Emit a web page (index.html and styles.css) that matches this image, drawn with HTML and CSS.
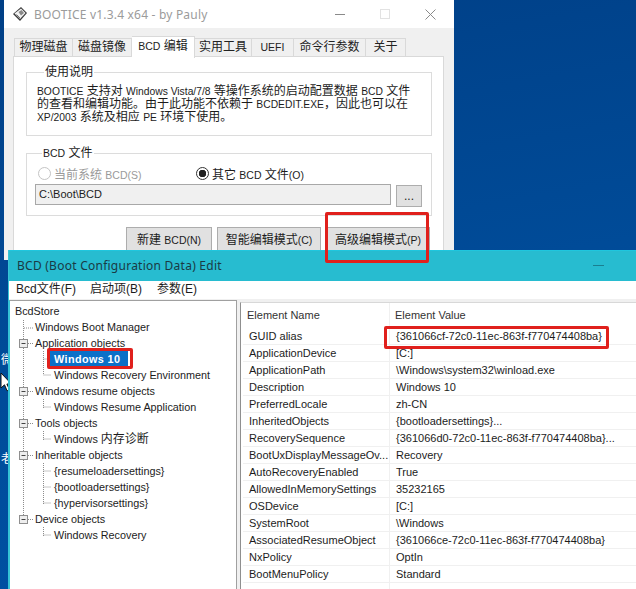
FILE: index.html
```html
<!DOCTYPE html>
<html lang="zh-CN">
<head>
<meta charset="utf-8">
<title>BOOTICE</title>
<link rel="stylesheet" href="styles.css">
</head>
<body>
<div class="desktop">
  <span class="deskglyph g1">微</span>
  <span class="deskglyph g2">老</span>
  <svg class="cursor" width="12" height="20" viewBox="0 0 12 20"><path d="M1 1v15l3.5-3.2 2.6 6 2.4-1-2.6-5.8h4.6z" fill="#fff" stroke="#111" stroke-width="1"/></svg>

  <section class="win boot">
    <header class="boot-title">
      <svg class="boot-icon" width="16" height="16" viewBox="0 0 16 16"><path d="M9 1l6 6-7 8-7-7z" fill="#3a3a3a"/><path d="M9 2.500l4.500 4.500-5.500 6-5.500-5.500z" fill="#f2f2f2"/><path d="M6.500 6l3-2 2.500 3-3 2.500z" fill="#8a8a8a"/><path d="M4.500 8.500l3.500 3.500" stroke="#777"/></svg>
      <span class="boot-name">BOOTICE v1.3.4 x64 - by Pauly</span>
      <div class="controls">
        <svg width="10" height="10" viewBox="0 0 10 10"><path d="M0 5.5h10" stroke="#8a8a8a"/></svg>
        <svg width="10" height="10" viewBox="0 0 10 10"><rect x=".5" y=".5" width="9" height="9" fill="none" stroke="#e2e2e2"/></svg>
        <svg width="11" height="11" viewBox="0 0 11 11"><path d="M.5.5l10 10M10.500.5l-10 10" stroke="#8a8a8a"/></svg>
      </div>
    </header>
    <div class="boot-body">
      <nav class="tabs">
        <span class="tab w59">物理磁盘</span>
        <span class="tab w59">磁盘镜像</span>
        <span class="tab active w63"><span class="lt">BCD</span> 编辑</span>
        <span class="tab w57">实用工具</span>
        <span class="tab w42"><span class="lt">UEFI</span></span>
        <span class="tab w72">命令行参数</span>
        <span class="tab w40">关于</span>
      </nav>
      <div class="panel">
        <fieldset class="group usage">
          <legend>使用说明</legend>
          <p><span class="lt">BOOTICE</span> 支持对 <span class="lt">Windows Vista/7/8</span> 等操作系统的启动配置数据 <span class="lt">BCD</span> 文件<br>的查看和编辑功能。由于此功能不依赖于 <span class="lt">BCDEDIT.EXE</span>，因此也可以在<br><span class="lt">XP/2003</span> 系统及相应 <span class="lt">PE</span> 环境下使用。</p>
        </fieldset>
        <fieldset class="group file">
          <legend><span class="lt">BCD</span> 文件</legend>
          <div class="radios">
            <label class="radio disabled"><i class="dot"></i><span>当前系统 <span class="lt">BCD(S)</span></span></label>
            <label class="radio"><i class="dot on"></i><span>其它 <span class="lt">BCD</span> 文件<span class="lt">(O)</span></span></label>
          </div>
          <div class="path-row">
            <div class="path">C:\Boot\BCD</div>
            <div class="btn browse">...</div>
          </div>
        </fieldset>
        <div class="actions">
          <div class="btn w86">新建 <span class="lt">BCD(N)</span></div>
          <div class="btn w104">智能编辑模式<span class="lt">(C)</span></div>
          <div class="btn w104">高级编辑模式<span class="lt">(P)</span></div>
        </div>
      </div>
    </div>
  </section>

  <section class="win edit">
    <header class="edit-title">
      <span>BCD (Boot Configuration Data) Edit</span>
      <i class="edit-min"></i>
    </header>
    <div class="menu">
      <span class="m1">Bcd文件(F)</span>
      <span class="m2">启动项(B)</span>
      <span class="m3">参数(E)</span>
    </div>
    <div class="client">
      <div class="tree">
        <svg class="lines" width="228" height="290" viewBox="0 0 228 290">
          <g fill="none" stroke="#8c8c8c" stroke-dasharray="1 1">
            <path d="M14.500 19v200M15 27h10"/>
            <path d="M34.500 50v24M34.500 58h8M34.500 74h8"/>
            <path d="M34.500 98v10M34.500 106h8"/>
            <path d="M34.500 130v10M34.500 138h8"/>
            <path d="M34.500 162v42M34.500 170h8M34.500 186h8M34.500 202h8"/>
            <path d="M34.500 226v10M34.500 234h8"/>
          </g>
          <g fill="#eeeeee" stroke="#8f8f8f">
            <rect x="10.500" y="38.500" width="8" height="8"/>
            <rect x="10.500" y="86.500" width="8" height="8"/>
            <rect x="10.500" y="118.500" width="8" height="8"/>
            <rect x="10.500" y="150.500" width="8" height="8"/>
            <rect x="10.500" y="214.500" width="8" height="8"/>
          </g>
          <g stroke="#444">
            <path d="M12.500 42.500h4M12.500 90.500h4M12.500 122.500h4M12.500 154.500h4M12.500 218.500h4"/>
            <path d="M19 42.500h6M19 90.500h6M19 122.500h6M19 154.500h6M19 218.500h6" stroke="#8c8c8c" stroke-dasharray="1 1"/>
          </g>
        </svg>
        <div class="node root">BcdStore</div>
        <div class="node l1">Windows Boot Manager</div>
        <div class="node l1">Application objects</div>
        <div class="node l2"><span class="selected">Windows 10</span></div>
        <div class="node l2">Windows Recovery Environment</div>
        <div class="node l1">Windows resume objects</div>
        <div class="node l2">Windows Resume Application</div>
        <div class="node l1">Tools objects</div>
        <div class="node l2">Windows <span class="cj">内存诊断</span></div>
        <div class="node l1">Inheritable objects</div>
        <div class="node l2">{resumeloadersettings}</div>
        <div class="node l2">{bootloadersettings}</div>
        <div class="node l2">{hypervisorsettings}</div>
        <div class="node l1">Device objects</div>
        <div class="node l2">Windows Recovery</div>
      </div>
      <div class="list">
        <div class="row head"><span class="name">Element Name</span><span class="value">Element Value</span></div>
        <div class="row"><span class="name">GUID alias</span><span class="value">{361066cf-72c0-11ec-863f-f770474408ba}</span></div>
        <div class="row"><span class="name">ApplicationDevice</span><span class="value">[C:]</span></div>
        <div class="row"><span class="name">ApplicationPath</span><span class="value">\Windows\system32\winload.exe</span></div>
        <div class="row"><span class="name">Description</span><span class="value">Windows 10</span></div>
        <div class="row"><span class="name">PreferredLocale</span><span class="value">zh-CN</span></div>
        <div class="row"><span class="name">InheritedObjects</span><span class="value">{bootloadersettings}...</span></div>
        <div class="row"><span class="name">RecoverySequence</span><span class="value">{361066d0-72c0-11ec-863f-f770474408ba}...</span></div>
        <div class="row"><span class="name">BootUxDisplayMessageOv...</span><span class="value">Recovery</span></div>
        <div class="row"><span class="name">AutoRecoveryEnabled</span><span class="value">True</span></div>
        <div class="row"><span class="name">AllowedInMemorySettings</span><span class="value">35232165</span></div>
        <div class="row"><span class="name">OSDevice</span><span class="value">[C:]</span></div>
        <div class="row"><span class="name">SystemRoot</span><span class="value">\Windows</span></div>
        <div class="row"><span class="name">AssociatedResumeObject</span><span class="value">{361066ce-72c0-11ec-863f-f770474408ba}</span></div>
        <div class="row"><span class="name">NxPolicy</span><span class="value">OptIn</span></div>
        <div class="row"><span class="name">BootMenuPolicy</span><span class="value">Standard</span></div>
        <div class="row"><span class="name"></span><span class="value"></span></div>
      </div>
    </div>
  </section>

  <i class="mark mark-button"></i>
  <i class="mark mark-tree"></i>
  <i class="mark mark-guid"></i>
</div>
</body>
</html>
```

FILE: styles.css
```css
* { box-sizing: border-box; }
html, body { margin: 0; height: 100%; overflow: hidden; }
body { font-family: "Liberation Sans", "Noto Sans CJK SC", sans-serif; font-size: 11px; color: #1c1c1c; }
.lt { font-size: 10.500px; }
.usage .lt { font-size: 10.300px; }
.cj { font-size: 12px; }
.desktop { position: relative; width: 636px; height: 589px; overflow: hidden; background: linear-gradient(170deg, #003f86 0%, #004b98 50%, #0052a6 100%); }
.win { position: absolute; }
.deskglyph { position: absolute; left: 1px; color: #fff; font-size: 12px; line-height: 14px; width: 7px; overflow: hidden; }
.g1 { top: 353px; }
.g2 { top: 452px; }
.cursor { position: absolute; left: 0; top: 372px; }

/* BOOTICE window */
.boot { left: 4px; top: 0; width: 450px; height: 260px; background: #f0f0f0; }
.boot-title { height: 28px; background: #fff; display: flex; align-items: center; padding-left: 8px; }
.boot-icon { margin-right: 6px; }
.boot-name { font-family: "Noto Sans", sans-serif; font-size: 12px; color: #9b9b9b; letter-spacing: .2px; }
.controls { margin-left: auto; display: flex; gap: 35px; align-items: center; padding-right: 18px; }
.boot-body { padding: 8px 10px 0 9px; }
.tabs { display: flex; height: 20px; padding-left: 1px; position: relative; z-index: 1; }
.tab { margin-top: 2px; height: 19px; background: #f0f0f0; border: 1px solid #d9d9d9; border-left-width: 0; font-size: 12px; line-height: 17px; text-align: center; color: #222; }
.tab:first-child { border-left-width: 1px; }
.tab.active { margin-top: 0; height: 22px; background: #fff; border-bottom: 0; line-height: 18px; position: relative; }
.w59 { width: 59px; }
.w63 { width: 63px; }
.w57 { width: 57px; }
.w42 { width: 42px; }
.w72 { width: 72px; }
.w40 { width: 40px; }
.panel { height: 204px; background: #fff; border: 1px solid #d9d9d9; padding: 8px 11px 0 12px; }
.group { margin: 0; padding: 0; border: 1px solid #dcdcdc; min-width: 0; }
.group legend { margin-left: 7px; padding: 0 1px; font-size: 12px; line-height: 14px; }
.usage { height: 71px; padding: 6px 0 0 10px; }
.usage p { margin: 0; font-size: 12px; line-height: 13px; white-space: nowrap; }
.file { height: 70px; margin-top: 10px; padding: 0 0 0 8px; }
.radios { display: flex; height: 18px; align-items: center; margin-top: 4px; }
.radio { display: flex; align-items: center; gap: 3px; font-size: 12px; }
.radio:first-child { width: 158px; margin-left: 3px; }
.radio.disabled { color: #9a9a9a; }
.dot { width: 13px; height: 13px; border: 1px solid #333; border-radius: 50%; background: #fff; display: block; }
.disabled .dot { border-color: #c4c4c4; }
.dot.on { background: radial-gradient(circle, #222 0 3.500px, #fff 4px); }
.path-row { display: flex; align-items: flex-start; gap: 5px; margin-top: 2px; }
.path { width: 356px; height: 21px; background: #f0f0f0; border: 1px solid #a8a8a8; line-height: 19px; padding-left: 3px; }
.btn { background: #e1e1e1; border: 1px solid #adadad; text-align: center; font-size: 12px; line-height: 24px; height: 26px; }
.browse { width: 26px; height: 22px; line-height: 20px; margin-top: 1px; }
.actions { display: flex; gap: 5px; margin: 11px 0 0 100px; }
.w86 { width: 86px; }
.w104 { width: 104px; }

/* BCD editor window */
.edit { left: 8px; top: 250px; width: 628px; height: 339px; background: #f0f0f0; border-left: 1px solid #36c3d6; }
.edit-title { height: 31px; background: #27bcd0; display: flex; align-items: center; padding: 0 0 2px 8px; font-family: "Noto Sans", sans-serif; font-size: 12px; letter-spacing: .25px; color: #1a3a44; border-top: 1px solid #1fc6de; }
.edit-min { display: block; width: 11px; height: 1px; background: #1a7f90; margin-left: 371px; }
.menu { height: 18px; background: #fff; display: flex; font-size: 12px; line-height: 17px; padding-left: 7px; }
.m1 { width: 74px; }
.m2 { width: 67px; }
.client { display: flex; gap: 3px; padding-top: 1px; height: 290px; align-items: flex-start; }
.tree { position: relative; width: 228px; height: 290px; background: #fff; border-left: 1px solid #36c3d6; border-right: 1px solid #a0a0a0; border-top: 1px solid #a0a0a0; }
.lines { position: absolute; left: -1px; top: 0; }
.node { position: relative; height: 16px; line-height: 16px; white-space: nowrap; font-size: 10.800px; }
.root { padding-left: 5px; margin-top: 2px; }
.l1 { padding-left: 25px; }
.l2 { padding-left: 44px; }
.selected { background: #0a70c8; color: #fff; font-weight: 700; display: inline-block; width: 78px; height: 16px; padding-left: 4px; margin-left: -4px; letter-spacing: .4px; }
.list { flex: 1; height: 290px; margin-top: 2px; background: #fff; border-left: 1px solid #8f8f8f; border-top: 1px solid #d8d8d8; padding-left: 2px; }
.row { display: flex; height: 17px; line-height: 16px; border-bottom: 1px solid #f0f0f0; }
.row.head { height: 25px; line-height: 24px; border-bottom-color: #fff; color: #333; }
.name { width: 147px; padding-left: 6px; border-right: 1px solid #f0f0f0; white-space: nowrap; overflow: hidden; }
.value { flex: 1; padding-left: 6px; white-space: nowrap; }
.head .name { padding-left: 4px; }
.head .value { padding-left: 5px; }

/* Red annotation frames */
.mark { position: absolute; border: 3px solid #e0201c; border-radius: 2px; }
.mark-button { left: 325px; top: 212px; width: 104px; height: 51px; }
.mark-tree { left: 47px; top: 348px; width: 86px; height: 21px; }
.mark-guid { left: 384px; top: 326px; width: 225px; height: 23px; }
```
